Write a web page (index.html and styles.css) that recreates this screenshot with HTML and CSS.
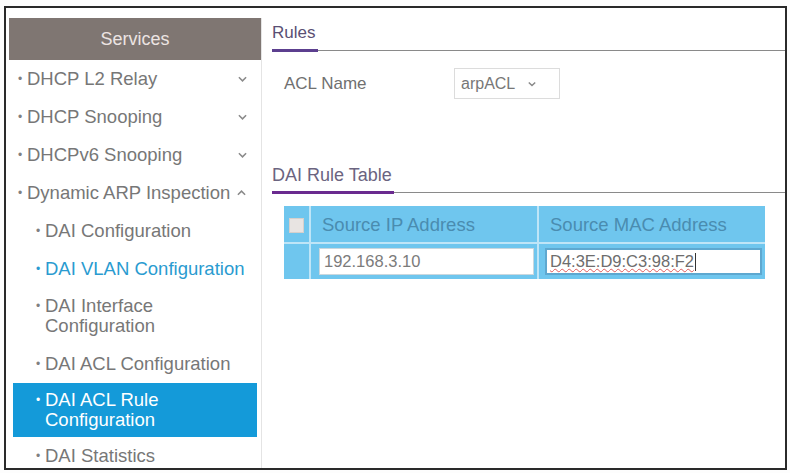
FILE: index.html
```html
<!DOCTYPE html>
<html>
<head>
<meta charset="utf-8">
<link rel="stylesheet" href="styles.css">
</head>
<body>
<div class="frame">
  <aside class="sidebar">
    <div class="side-head">Services</div>
    <ul class="menu">
      <li class="item"><span class="bul">•</span><span class="lbl">DHCP L2 Relay</span><svg class="chev" viewBox="0 0 10 6"><path d="M1 1l4 4 4-4" /></svg></li>
      <li class="item"><span class="bul">•</span><span class="lbl">DHCP Snooping</span><svg class="chev" viewBox="0 0 10 6"><path d="M1 1l4 4 4-4" /></svg></li>
      <li class="item"><span class="bul">•</span><span class="lbl">DHCPv6 Snooping</span><svg class="chev" viewBox="0 0 10 6"><path d="M1 1l4 4 4-4" /></svg></li>
      <li class="item"><span class="bul">•</span><span class="lbl">Dynamic ARP Inspection</span><svg class="chev up" viewBox="0 0 10 6"><path d="M1 5l4-4 4 4" /></svg></li>
      <li class="item sub"><span class="bul">•</span><span class="lbl">DAI Configuration</span></li>
      <li class="item sub link"><span class="bul">•</span><span class="lbl">DAI VLAN Configuration</span></li>
      <li class="item sub two"><span class="bul">•</span><span class="lbl">DAI Interface<br>Configuration</span></li>
      <li class="item sub acl"><span class="bul">•</span><span class="lbl">DAI ACL Configuration</span></li>
      <li class="item sub two active"><span class="bul">•</span><span class="lbl">DAI ACL Rule<br>Configuration</span></li>
      <li class="item sub"><span class="bul">•</span><span class="lbl">DAI Statistics</span></li>
    </ul>
  </aside>
  <main class="content">
    <div class="tabbar"><span class="tab">Rules</span></div>
    <div class="field">
      <span class="field-label">ACL Name</span>
      <div class="select"><span>arpACL</span><svg class="chev" viewBox="0 0 10 6"><path d="M1 1l4 4 4-4" /></svg></div>
    </div>
    <div class="tabbar second"><span class="tab">DAI Rule Table</span></div>
    <div class="table">
      <div class="cell chk head"><span class="box"></span></div>
      <div class="cell head col1">Source IP Address</div>
      <div class="cell head col2">Source MAC Address</div>
      <div class="cell chk"></div>
      <div class="cell col1"><div class="inp">192.168.3.10</div></div>
      <div class="cell col2"><div class="inp focus"><span class="sq">D4:3E:D9:C3:98:F2</span><span class="caret"></span></div></div>
    </div>
  </main>
</div>
</body>
</html>
```
FILE: styles.css
```css
html, body {
  margin: 0;
  padding: 0;
  background: #fdfdfd;
}
body {
  font-family: "Liberation Sans", Arial, sans-serif;
  width: 790px;
  height: 473px;
  overflow: hidden;
}
.frame {
  margin: 6px 0 0 4px;
  width: 779px;
  height: 460px;
  border: 2px solid #2a2a2a;
  display: flex;
  background: #fff;
  overflow: hidden;
}
.sidebar {
  width: 252px;
  margin: 10px 0 0 3px;
  border-right: 1px solid #e4e4e4;
  flex: none;
}
.side-head {
  height: 42px;
  background: #7f7672;
  color: #ece4e2;
  font-size: 18px;
  display: flex;
  align-items: center;
  justify-content: center;
}
.menu {
  list-style: none;
  margin: 0;
  padding: 0;
}
.item {
  height: 38px;
  display: flex;
  align-items: center;
  font-size: 18.5px;
  color: #777;
  padding-left: 5px;
  margin: 0 4px;
}
.item .bul {
  font-size: 12px;
  width: 9px;
  color: #808080;
}
.item .lbl {
  flex: none;
  line-height: 20px;
}
.item .chev {
  width: 9px;
  height: 6px;
  margin-left: auto;
  margin-right: 10px;
  fill: none;
  stroke: #8a8a8a;
  stroke-width: 1.7;
}
.item .chev.up {
  margin-left: 7px;
}
.item.sub {
  padding-left: 23px;
  height: 38px;
}
.item.sub.two {
  height: 56px;
  align-items: flex-start;
  padding-top: 8px;
  box-sizing: border-box;
}
.item.sub.two .bul {
  line-height: 20px;
}
.item.link {
  color: #2a9bd0;
}
.item.link .bul {
  color: #2a9bd0;
}
.item.sub.acl {
  height: 39px;
}
.item.sub.two.active {
  background: #149ad9;
  color: #fff;
  height: 54px;
  padding-top: 7px;
}
.item.active .bul {
  color: #fff;
}

.content {
  flex: 1;
  margin-left: 10px;
  padding-top: 13px;
}
.tabbar {
  border-bottom: 1px solid #8a8a8a;
  height: 29px;
  display: flex;
  align-items: flex-end;
}
.tab {
  font-size: 17px;
  color: #5a4f74;
  border-bottom: 3px solid #5c3f8f;
  padding-bottom: 6px;
  margin-bottom: -2px;
  padding-right: 3px;
}
.field {
  display: flex;
  align-items: center;
  height: 31px;
  margin-top: 17px;
  padding-left: 12px;
}
.field-label {
  font-size: 17px;
  color: #707070;
  width: 170px;
}
.select {
  width: 106px;
  height: 31px;
  border: 1px solid #dcdcdc;
  box-sizing: border-box;
  display: flex;
  align-items: center;
  padding-left: 6px;
  font-size: 16px;
  color: #777;
}
.select .chev {
  width: 8px;
  height: 6px;
  margin-left: 13px;
  fill: none;
  stroke: #888;
  stroke-width: 1.8;
}
.tabbar.second {
  margin-top: 64px;
}
.tabbar.second .tab {
  color: #6b6480;
  font-size: 18px;
  padding-bottom: 5px;
  border-bottom-color: #6a2a8f;
  padding-right: 2px;
}
.table {
  margin: 13px 0 0 12px;
  width: 481px;
  display: grid;
  grid-template-columns: 27px 228px 226px;
  grid-template-rows: 38px 35px;
  background: #6fc6ee;
}
.cell {
  display: flex;
  align-items: center;
  box-sizing: border-box;
}
.cell.head {
  font-size: 18.5px;
  color: #4a8cb0;
  padding-left: 11px;
  padding-top: 2px;
  border-bottom: 2px solid #bfe5f7;
}
.cell.chk {
  justify-content: center;
  border-right: 2px solid #bfe5f7;
}
.cell.chk.head {
  padding-left: 0;
}
.cell.col1 {
  border-right: 2px solid #bfe5f7;
}
.box {
  width: 13px;
  height: 13px;
  background: #e8e4e2;
  border: 1px solid #d6d0cc;
}
.cell.col1:not(.head), .cell.col2:not(.head) {
  padding: 0 3px 0 8px;
}
.cell.col2:not(.head) {
  padding-left: 6px;
}
.inp {
  flex: 1;
  height: 27px;
  background: #fff;
  border: 1px solid #c9d7de;
  box-sizing: border-box;
  display: flex;
  align-items: center;
  padding-left: 4px;
  font-size: 16.5px;
  color: #7b7b7b;
}
.inp.focus {
  border: 2px solid #5ea8d0;
  padding-left: 3px;
  color: #6d6d6d;
}
.sq {
  text-decoration: underline wavy #e05a5a;
  text-decoration-thickness: 1px;
  text-underline-offset: 1px;
}
.caret {
  width: 1px;
  height: 18px;
  background: #333;
  margin-left: 1px;
}
```
